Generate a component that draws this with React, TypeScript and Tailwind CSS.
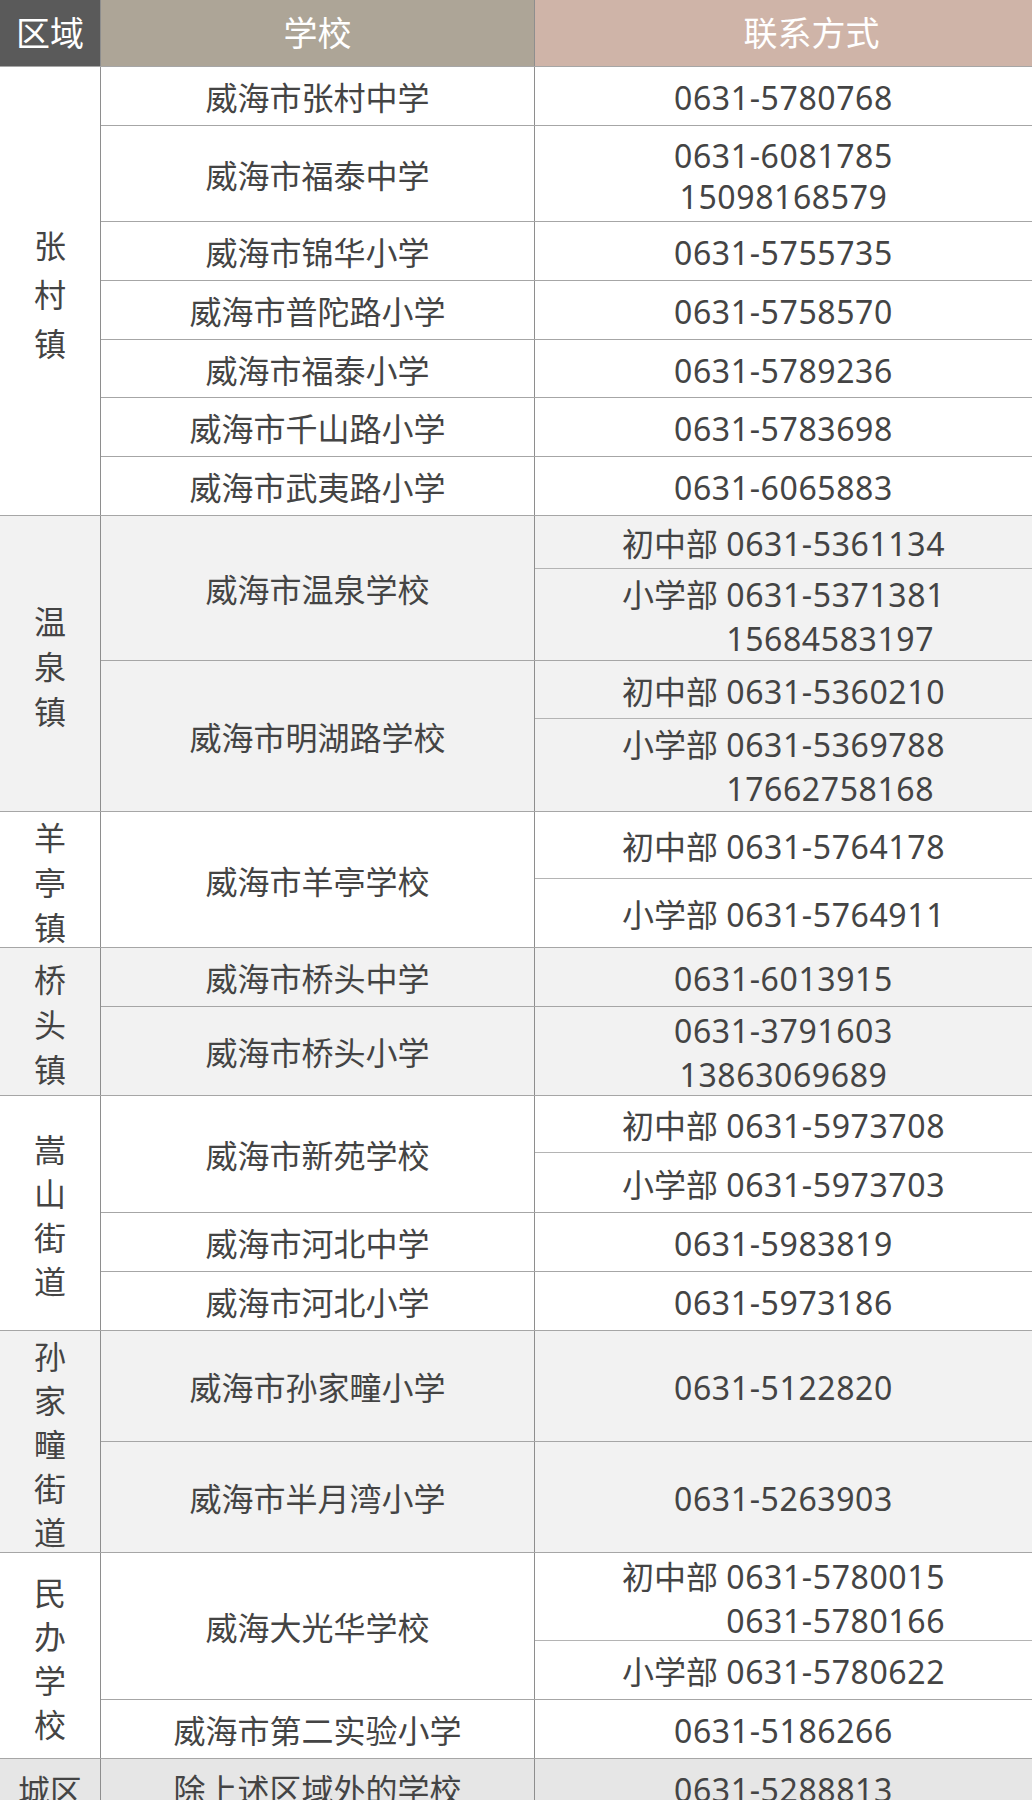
import React from "react";

type Contact = { h: string; label?: string; lines: string[]; lh?: string };
type School = { name: string; contacts: Contact[] };
type Group = { region: string[]; regionLh: string; bg: string; schools: School[] };

const groups: Group[] = [
  {
    region: ["张", "村", "镇"],
    regionLh: "leading-[49px]",
    bg: "bg-white",
    schools: [
      { name: "威海市张村中学", contacts: [{ h: "h-[58px]", lines: ["0631-5780768"] }] },
      { name: "威海市福泰中学", contacts: [{ h: "h-[95px]", lines: ["0631-6081785", "15098168579"], lh: "leading-[41px]" }] },
      { name: "威海市锦华小学", contacts: [{ h: "h-[58px]", lines: ["0631-5755735"] }] },
      { name: "威海市普陀路小学", contacts: [{ h: "h-[58px]", lines: ["0631-5758570"] }] },
      { name: "威海市福泰小学", contacts: [{ h: "h-[57px]", lines: ["0631-5789236"] }] },
      { name: "威海市千山路小学", contacts: [{ h: "h-[58px]", lines: ["0631-5783698"] }] },
      { name: "威海市武夷路小学", contacts: [{ h: "h-[58px]", lines: ["0631-6065883"] }] },
    ],
  },
  {
    region: ["温", "泉", "镇"],
    regionLh: "leading-[45px]",
    bg: "bg-[#f2f2f2]",
    schools: [
      {
        name: "威海市温泉学校",
        contacts: [
          { h: "h-[53px]", label: "初中部", lines: ["0631-5361134"] },
          { h: "h-[91px]", label: "小学部", lines: ["0631-5371381", "15684583197"] },
        ],
      },
      {
        name: "威海市明湖路学校",
        contacts: [
          { h: "h-[58px]", label: "初中部", lines: ["0631-5360210"] },
          { h: "h-[92px]", label: "小学部", lines: ["0631-5369788", "17662758168"] },
        ],
      },
    ],
  },
  {
    region: ["羊", "亭", "镇"],
    regionLh: "leading-[45px]",
    bg: "bg-white",
    schools: [
      {
        name: "威海市羊亭学校",
        contacts: [
          { h: "h-[67px]", label: "初中部", lines: ["0631-5764178"] },
          { h: "h-[68px]", label: "小学部", lines: ["0631-5764911"] },
        ],
      },
    ],
  },
  {
    region: ["桥", "头", "镇"],
    regionLh: "leading-[45px]",
    bg: "bg-[#f2f2f2]",
    schools: [
      { name: "威海市桥头中学", contacts: [{ h: "h-[58px]", lines: ["0631-6013915"] }] },
      { name: "威海市桥头小学", contacts: [{ h: "h-[88px]", lines: ["0631-3791603", "13863069689"] }] },
    ],
  },
  {
    region: ["嵩", "山", "街", "道"],
    regionLh: "leading-[44px]",
    bg: "bg-white",
    schools: [
      {
        name: "威海市新苑学校",
        contacts: [
          { h: "h-[57px]", label: "初中部", lines: ["0631-5973708"] },
          { h: "h-[59px]", label: "小学部", lines: ["0631-5973703"] },
        ],
      },
      { name: "威海市河北中学", contacts: [{ h: "h-[58px]", lines: ["0631-5983819"] }] },
      { name: "威海市河北小学", contacts: [{ h: "h-[58px]", lines: ["0631-5973186"] }] },
    ],
  },
  {
    region: ["孙", "家", "疃", "街", "道"],
    regionLh: "leading-[44px]",
    bg: "bg-[#f2f2f2]",
    schools: [
      { name: "威海市孙家疃小学", contacts: [{ h: "h-[110px]", lines: ["0631-5122820"] }] },
      { name: "威海市半月湾小学", contacts: [{ h: "h-[110px]", lines: ["0631-5263903"] }] },
    ],
  },
  {
    region: ["民", "办", "学", "校"],
    regionLh: "leading-[44px]",
    bg: "bg-white",
    schools: [
      {
        name: "威海大光华学校",
        contacts: [
          { h: "h-[88px]", label: "初中部", lines: ["0631-5780015", "0631-5780166"] },
          { h: "h-[58px]", label: "小学部", lines: ["0631-5780622"] },
        ],
      },
      { name: "威海市第二实验小学", contacts: [{ h: "h-[58px]", lines: ["0631-5186266"] }] },
    ],
  },
  {
    region: ["城区"],
    regionLh: "leading-[44px]",
    bg: "bg-[#e6e6e6]",
    schools: [{ name: "除上述区域外的学校", contacts: [{ h: "h-[58px]", lines: ["0631-5288813"] }] }],
  },
];

function ContactCell({ c }: { c: Contact }) {
  const lh = c.lh ?? "leading-[44px]";
  return (
    <div className={`${c.h} flex items-center justify-center ${lh}`}>
      {c.label ? (
        <div className="inline-flex translate-y-[2px]">
          <span className="whitespace-pre">{c.label + " "}</span>
          <div className="flex flex-col text-left tracking-[0.6px]">
            {c.lines.map((l) => (
              <span key={l}>{l}</span>
            ))}
          </div>
        </div>
      ) : (
        <div className="flex flex-col items-center tracking-[0.6px] translate-y-[2px]">
          {c.lines.map((l) => (
            <span key={l}>{l}</span>
          ))}
        </div>
      )}
    </div>
  );
}

export default function App() {
  return (
    <div
      className="w-[1032px] h-[1800px] overflow-hidden bg-white text-[32px] text-[#444444]"
      style={{ fontFamily: '"Noto Sans", "Noto Sans CJK SC", sans-serif' }}
    >
      <div className="flex h-[66px] text-white text-[34px] leading-[44px]">
        <div className="w-[100px] bg-[#5a5a5a] flex items-center justify-center">区域</div>
        <div className="w-[434px] bg-[#ada597] border-l border-[#8e8e8e] flex items-center justify-center">学校</div>
        <div className="flex-1 bg-[#cfb4a8] border-l border-[#8e8e8e] flex items-center justify-center pl-[56px]">联系方式</div>
      </div>
      {groups.map((g, gi) => (
        <div key={gi} className={`flex border-t border-[#a6a6a6] ${g.bg}`}>
          <div className="w-[100px] shrink-0 flex items-center justify-center">
            <div className={`flex flex-col items-center translate-y-[3px] ${g.regionLh}`}>
              {g.region.map((ch) => (
                <span key={ch}>{ch}</span>
              ))}
            </div>
          </div>
          <div className="flex-1 flex flex-col border-l border-[#8e8e8e] divide-y divide-[#a6a6a6]">
            {g.schools.map((s) => (
              <div key={s.name} className="flex">
                <div className="w-[433px] shrink-0 flex items-center justify-center leading-[44px]">
                  <span className="translate-y-[2px]">{s.name}</span>
                </div>
                <div className="flex-1 flex flex-col border-l border-[#8e8e8e] divide-y divide-[#b4b4b4]">
                  {s.contacts.map((c, ci) => (
                    <ContactCell key={ci} c={c} />
                  ))}
                </div>
              </div>
            ))}
          </div>
        </div>
      ))}
    </div>
  );
}
